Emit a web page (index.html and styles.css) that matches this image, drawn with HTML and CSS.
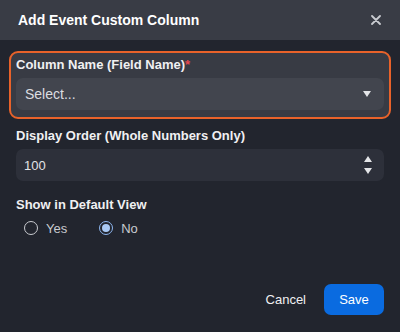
FILE: index.html
```html
<!DOCTYPE html>
<html lang="en">

<head>
  <meta charset="UTF-8">
  <meta name="viewport" content="width=device-width, initial-scale=1">
  <title>Add Event Custom Column</title>
  <link rel="stylesheet" href="styles.css">
</head>

<body>

  <div class="dialog">
    <div class="dialog-header">
      <h2>Add Event Custom Column</h2>
      <button class="close" aria-label="Close">
        <svg width="10" height="10" viewBox="0 0 10 10">
          <path d="M1 1 L9 9 M9 1 L1 9" stroke="#c9cbd0" stroke-width="1.8" stroke-linecap="round" />
        </svg>
      </button>
    </div>

    <div class="dialog-body">
      <div class="field highlight">
        <label>Column Name (Field Name)<span class="req">*</span></label>
        <div class="select">
          <span>Select...</span>
          <svg width="8" height="6" viewBox="0 0 8 6"><path d="M0 0 H8 L4 6 Z" fill="#e4e5e8" /></svg>
        </div>
      </div>

      <div class="field">
        <label>Display Order (Whole Numbers Only)</label>
        <div class="number">
          <span>100</span>
          <span class="spin">
            <svg width="8" height="6" viewBox="0 0 8 6"><path d="M0 6 H8 L4 0 Z" fill="#e4e5e8" /></svg>
            <svg width="8" height="6" viewBox="0 0 8 6"><path d="M0 0 H8 L4 6 Z" fill="#e4e5e8" /></svg>
          </span>
        </div>
      </div>

      <div class="field">
        <label>Show in Default View</label>
        <div class="radios">
          <label class="radio"><span class="dot"></span>Yes</label>
          <label class="radio"><span class="dot checked"></span>No</label>
        </div>
      </div>
    </div>

    <div class="dialog-footer">
      <button class="cancel">Cancel</button>
      <button class="save">Save</button>
    </div>
  </div>

</body>

</html>
```

FILE: styles.css
```css
* {
  box-sizing: border-box;
  margin: 0;
  padding: 0;
}

body {
  font-family: "Liberation Sans", Arial, sans-serif;
  background: #22252e;
  color: #f0f0f2;
}

.dialog {
  width: 400px;
  height: 332px;
  display: flex;
  flex-direction: column;
  background: #22252e;
}

.dialog-header {
  height: 40px;
  background: #393c45;
  display: flex;
  align-items: center;
  justify-content: space-between;
  padding: 0 19px 0 18px;
}

.dialog-header h2 {
  font-size: 14px;
  font-weight: bold;
  color: #fff;
}

.close {
  background: none;
  border: none;
  display: flex;
}

.dialog-body {
  padding: 11px 16px 0;
}

.field {
  margin-top: 9px;
}

.field>label {
  display: block;
  font-size: 13px;
  font-weight: bold;
  line-height: 16px;
  margin-bottom: 5px;
}

.field.highlight {
  margin: 0 -7px;
  padding: 4px 5px 7px;
  border: 2px solid #e8622a;
  border-radius: 9px;
  background: #383b44;
}

.req {
  color: #e5484d;
}

.select,
.number {
  height: 32px;
  border-radius: 7px;
  display: flex;
  align-items: center;
  justify-content: space-between;
  font-size: 14px;
}

.select {
  background: #42454e;
  padding: 0 13px 0 9px;
  color: #dcdde0;
}

.number {
  background: #2d303a;
  padding: 0 12px 0 8px;
  color: #e2e3e6;
  font-size: 13px;
}

.spin {
  display: flex;
  flex-direction: column;
  gap: 6px;
}

.field:nth-child(3) {
  margin-top: 16px;
}

.radios {
  display: flex;
  gap: 32px;
  padding-left: 8px;
  height: 20px;
  align-items: center;
}

.radio {
  display: flex;
  align-items: center;
  gap: 8px;
  font-size: 13px;
  color: #c9cbd0;
}

.dot {
  width: 14px;
  height: 14px;
  border: 1.5px solid #c9cbd0;
  border-radius: 50%;
  display: flex;
  align-items: center;
  justify-content: center;
}

.dot.checked {
  border-color: #8db6ef;
}

.dot.checked::after {
  content: "";
  width: 8px;
  height: 8px;
  border-radius: 50%;
  background: #a9c9f5;
}

.dialog-footer {
  margin-top: auto;
  display: flex;
  justify-content: flex-end;
  align-items: center;
  gap: 18px;
  padding: 0 16px 17px;
}

.dialog-footer button {
  font-family: inherit;
  font-size: 13px;
  border: none;
  cursor: pointer;
}

.cancel {
  background: none;
  color: #f0f0f2;
}

.save {
  width: 60px;
  height: 31px;
  background: #0a6be0;
  color: #fff;
  border-radius: 7px;
}
```
